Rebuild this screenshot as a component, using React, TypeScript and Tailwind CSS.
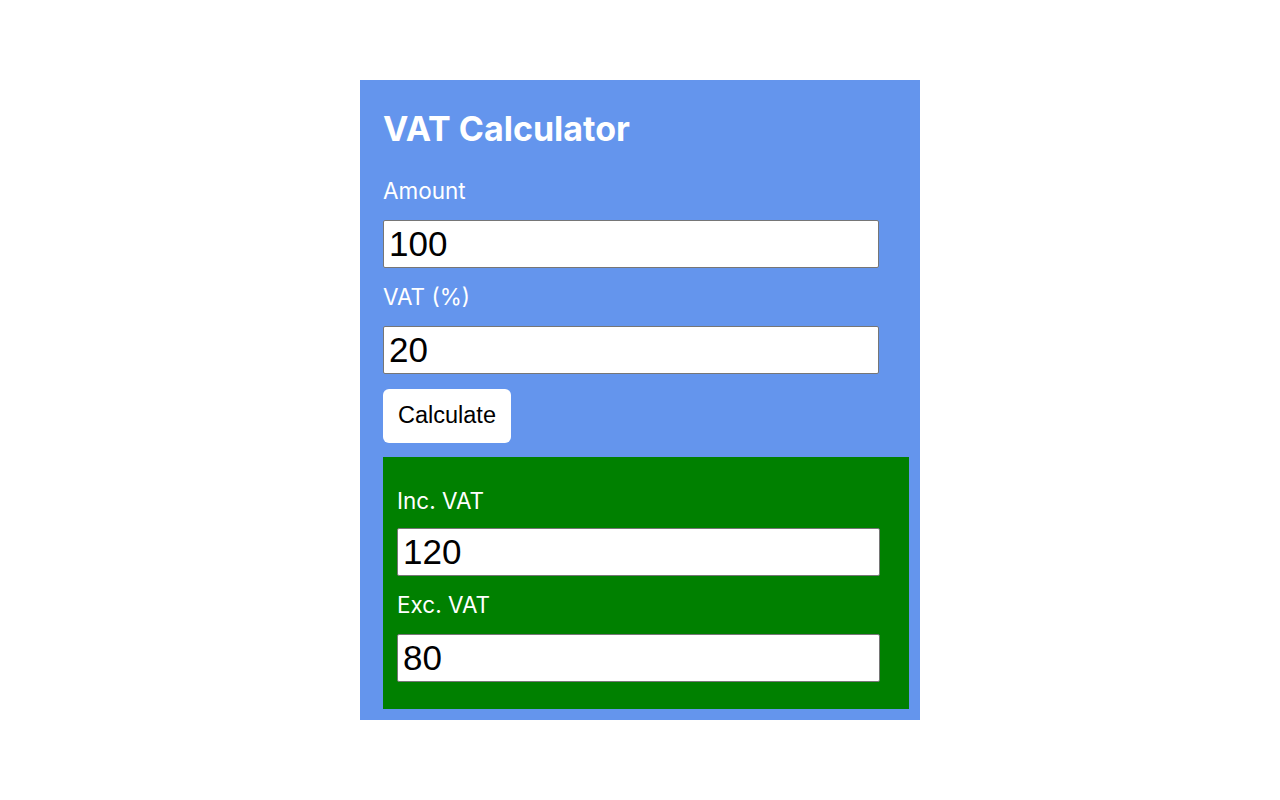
import React from "react";

const inputCls =
  "block h-12 rounded-[2px] border border-[#767676] bg-white pl-[5px] pr-[3px] text-[35px] text-black outline-none [font-family:'Liberation_Sans',Arial,sans-serif]";

export default function App() {
  const [amount, setAmount] = React.useState("100");
  const [vat, setVat] = React.useState("20");
  const [result, setResult] = React.useState({ inc: "120", exc: "80" });

  const calculate = () => {
    const a = parseFloat(amount) || 0;
    const v = parseFloat(vat) || 0;
    setResult({ inc: String(a + (a * v) / 100), exc: String(a - (a * v) / 100) });
  };

  return (
    <div className="min-h-screen bg-white [font-family:Inter,'Noto_Sans',sans-serif]">
      <div className="flex justify-center pt-20">
        <div className="h-[640px] w-[560px] bg-[#6495ed] pl-[23px] pt-[29px]">
          <h1 className="text-[34px] font-bold leading-10 text-white">VAT Calculator</h1>

          <div className="mt-[29px]">
            <label className="block text-[22.5px] leading-[26px] text-white">Amount</label>
            <input
              type="text"
              value={amount}
              onChange={(e) => setAmount(e.target.value)}
              className={`mt-4 w-[496px] ${inputCls}`}
            />
          </div>
          <div className="mt-4">
            <label className="block text-[22.5px] leading-[26px] text-white">VAT (%)</label>
            <input
              type="text"
              value={vat}
              onChange={(e) => setVat(e.target.value)}
              className={`mt-4 w-[496px] ${inputCls}`}
            />
          </div>

          <button
            onClick={calculate}
            className="mt-[15px] block h-[54px] w-32 rounded-md bg-white text-[23.5px] text-black [font-family:'Liberation_Sans',Arial,sans-serif]"
          >
            Calculate
          </button>

          {/* result box */}
          <div className="mt-[14px] h-[252px] w-[526px] bg-[#008000] pl-[14px] pt-[31px]">
            <div>
              <label className="block text-[22.5px] leading-[26px] text-white">Inc. VAT</label>
              <input
                type="text"
                readOnly
                value={result.inc}
                className={`mt-[14px] w-[483px] ${inputCls}`}
              />
            </div>
            <div className="mt-4">
              <label className="block text-[22.5px] leading-[26px] text-white">Exc. VAT</label>
              <input
                type="text"
                readOnly
                value={result.exc}
                className={`mt-4 w-[483px] ${inputCls}`}
              />
            </div>
          </div>
        </div>
      </div>
    </div>
  );
}
